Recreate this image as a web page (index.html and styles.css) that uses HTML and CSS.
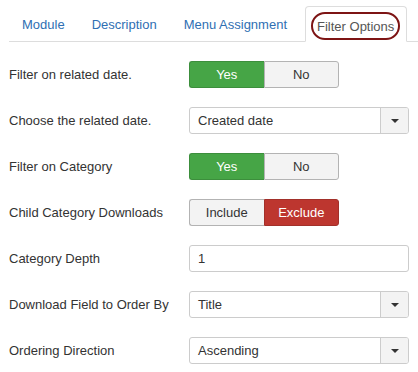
FILE: index.html
```html
<!DOCTYPE html>
<html>
<head>
<meta charset="utf-8">
<link rel="stylesheet" href="styles.css">
</head>
<body>
<div class="page">
  <ul class="tabs">
    <li><a class="tab">Module</a></li>
    <li><a class="tab">Description</a></li>
    <li><a class="tab">Menu Assignment</a></li>
    <li><a class="tab active"><span class="oval">Filter Options</span></a></li>
  </ul>
  <div class="form">
    <div class="row">
      <div class="label">Filter on related date.</div>
      <div class="toggle"><span class="btn on-green">Yes</span><span class="btn">No</span></div>
    </div>
    <div class="row">
      <div class="label">Choose the related date.</div>
      <div class="select"><span class="value">Created date</span><span class="caret-box"><span class="caret"></span></span></div>
    </div>
    <div class="row">
      <div class="label">Filter on Category</div>
      <div class="toggle"><span class="btn on-green">Yes</span><span class="btn">No</span></div>
    </div>
    <div class="row">
      <div class="label">Child Category Downloads</div>
      <div class="toggle"><span class="btn">Include</span><span class="btn on-red">Exclude</span></div>
    </div>
    <div class="row">
      <div class="label">Category Depth</div>
      <div class="input">1</div>
    </div>
    <div class="row">
      <div class="label">Download Field to Order By</div>
      <div class="select"><span class="value">Title</span><span class="caret-box"><span class="caret"></span></span></div>
    </div>
    <div class="row">
      <div class="label">Ordering Direction</div>
      <div class="select"><span class="value">Ascending</span><span class="caret-box"><span class="caret"></span></span></div>
    </div>
  </div>
</div>
</body>
</html>
```

FILE: styles.css
```css
* { box-sizing: border-box; }
html, body { margin: 0; padding: 0; background: #fff; }
body {
  font-family: "Liberation Sans", Arial, sans-serif;
  font-size: 13px;
  color: #333;
}
.page { padding: 6px 9px 0 9px; }
.tabs {
  list-style: none;
  margin: 0 -9px 0 0;
  padding: 0;
  display: flex;
  border-bottom: 1px solid #ddd;
  height: 36px;
}
.tabs li { display: flex; }
.tab {
  display: flex;
  align-items: center;
  padding: 1px 14px 0 14px;
  height: 36px;
  color: #2f6fb3;
  margin-left: -1px;
}
.tabs li:first-child .tab { margin-left: -1px; }
.tab.active {
  margin-left: 4px;
  padding: 5px 6px 0 5px;
  border: 1px solid #ddd;
  border-bottom: 1px solid #fff;
  border-radius: 4px 4px 0 0;
  background: #fff;
  color: #555;
  align-items: flex-start;
}
.oval {
  display: inline-flex;
  align-items: center;
  height: 28px;
  padding: 0 4px 0 4px;
  border: 2px solid #7d1414;
  border-radius: 14px;
  color: #555;
}
.form { padding-top: 19px; width: 400px; }
.row {
  display: flex;
  align-items: center;
  height: 27px;
  margin-bottom: 19px;
}
.label { width: 180px; flex: none; }
.toggle {
  display: flex;
  width: 150px;
  height: 27px;
}
.btn {
  flex: 1;
  display: flex;
  align-items: center;
  justify-content: center;
  background: #f3f3f3;
  border: 1px solid #b3b3b3;
  color: #333;
}
.btn:first-child { border-radius: 3px 0 0 3px; border-right: none; }
.btn:last-child { border-radius: 0 3px 3px 0; }
.btn.on-green { background: #46a546; border-color: #3c8e3c; color: #fff; }
.btn.on-red { background: #bd362f; border-color: #a2302a; color: #fff; }
.select, .input {
  width: 220px;
  height: 27px;
  border: 1px solid #ccc;
  border-radius: 3px;
  display: flex;
  align-items: center;
  background: #fff;
}
.value { flex: 1; padding-left: 8px; }
.input { padding-left: 8px; }
.caret-box {
  width: 28px;
  height: 100%;
  background: #f3f3f3;
  border-left: 1px solid #ccc;
  display: flex;
  align-items: center;
  justify-content: center;
  border-radius: 0 2px 2px 0;
}
.caret {
  width: 0; height: 0;
  border-left: 4px solid transparent;
  border-right: 4px solid transparent;
  border-top: 4px solid #333;
}
```
